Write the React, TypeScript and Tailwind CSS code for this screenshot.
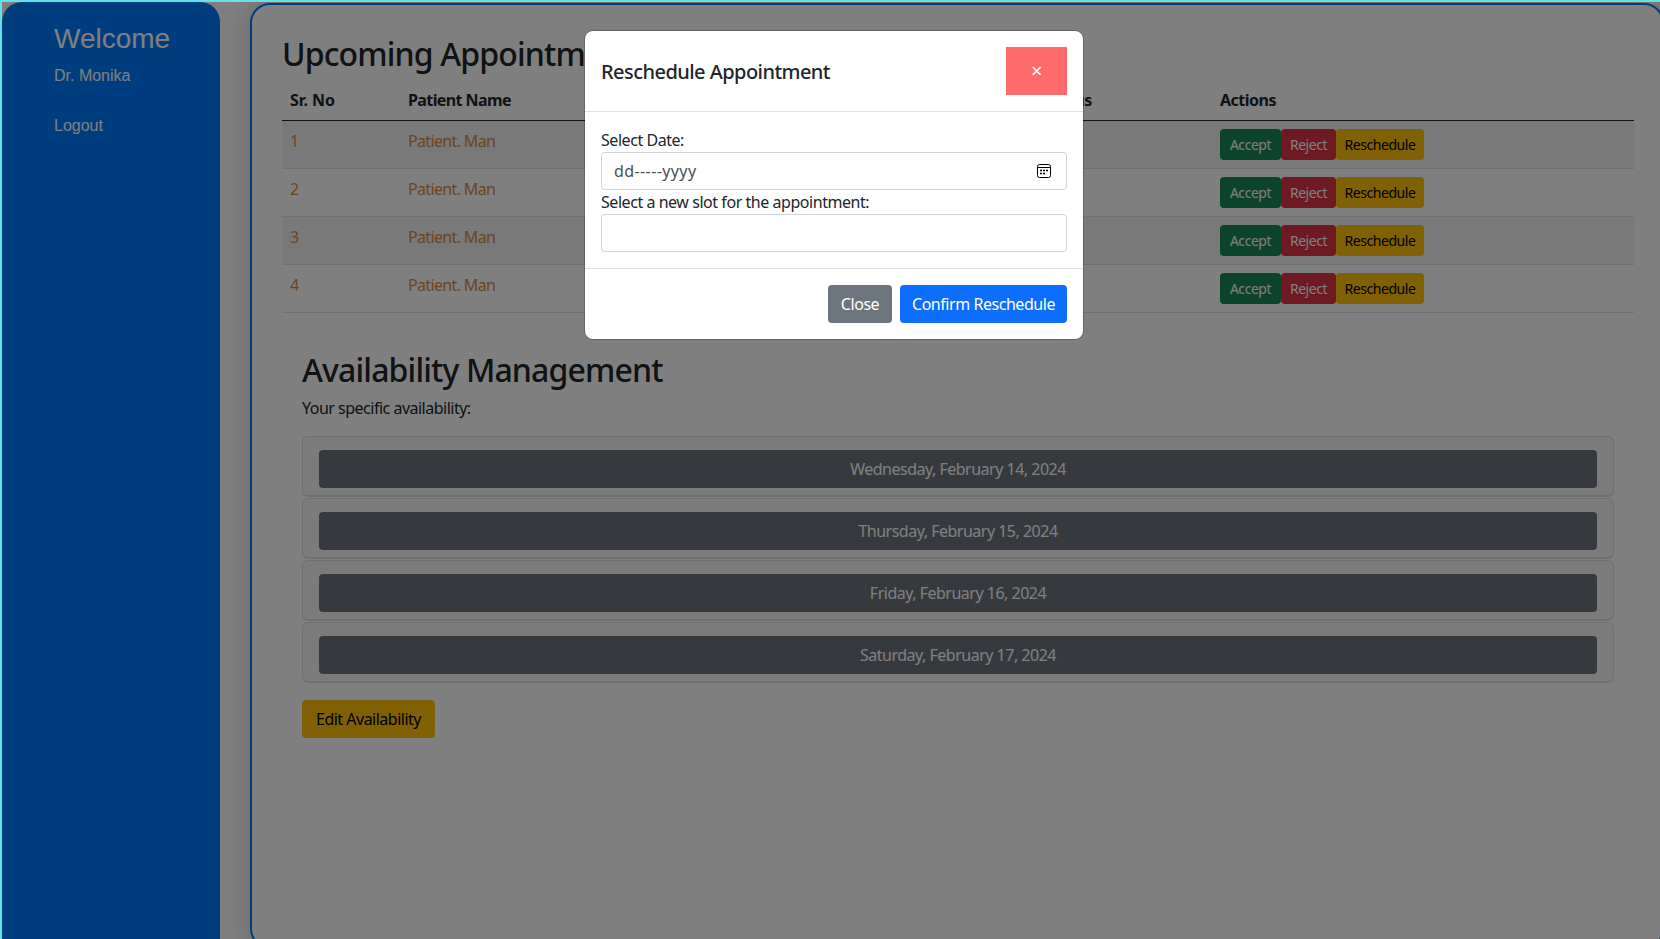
const rows = [1, 2, 3, 4];
const dates = [
  "Wednesday, February 14, 2024",
  "Thursday, February 15, 2024",
  "Friday, February 16, 2024",
  "Saturday, February 17, 2024",
];

const CalendarIcon = () => (
  <svg width="14" height="14" viewBox="0 0 14 14" fill="none" stroke="#000">
    <rect x="0.5" y="0.5" width="13" height="13" rx="2" />
    <path d="M1 3.5h12" />
    <path d="M3 6.5h2M6 6.5h2M9 6.5h2M3 9.5h2M6 9.5h2" strokeWidth="1.6" />
  </svg>
);

const App = () => {
  return (
    <div className="relative h-[939px] w-[1660px] overflow-hidden border-t-2 border-l-2 border-[#66dfe6] bg-white font-['Noto_Sans',sans-serif] text-[16px] tracking-[-0.5px] text-[#212529]">
      {/* page */}
      <div className="flex h-full">
        {/* Sidebar */}
        <aside className="w-[218px] shrink-0 rounded-t-[20px] bg-[#007bff] pl-[52px] pt-[21px] font-['Liberation_Sans',sans-serif] tracking-normal text-white">
          <div className="text-[28px] leading-[32px]">Welcome</div>
          <div className="mt-[12px] text-[16px] leading-[18px]">Dr. Monika</div>
          <div className="mt-[32px] text-[16px] leading-[18px]">Logout</div>
        </aside>

        {/* Main */}
        <main className="ml-[30px] mt-px h-[946px] w-[1414px] shrink-0 rounded-[20px] border-2 border-[#007bff] pl-[30px] shadow-[0_0_30px_rgba(0,0,0,0.2)]">
          <h2 className="mt-[30px] text-[32px] font-medium leading-[38px] tracking-[-0.85px]">Upcoming Appointments</h2>

          <table className="mt-[7px] w-[1352px] table-fixed border-collapse text-left">
            <thead>
              <tr className="h-[40px] border-b border-[#212529]">
                <th className="w-[118px] px-2 font-bold tracking-normal">Sr. No</th>
                <th className="w-[350px] px-2 font-bold tracking-[-0.6px]">Patient Name</th>
                <th className="w-[286px] px-2 font-bold">Date</th>
                <th className="w-[176px] px-2 font-bold">Status</th>
                <th className="px-2 font-bold">Actions</th>
              </tr>
            </thead>
            <tbody>
              {rows.map((n) => (
                <tr key={n} className={`h-[48px] border-b border-[#dee2e6] ${n % 2 === 1 ? "bg-black/5" : ""}`}>
                  <td className="px-2 align-top pt-[8px] text-[#d98a3f]">{n}</td>
                  <td className="px-2 align-top pt-[8px] tracking-[-0.65px] text-[#d98a3f]">Patient. Man</td>
                  <td />
                  <td />
                  <td className="px-2 align-top pt-[8px]">
                    <div className="flex text-[14px] leading-[21px] tracking-[-0.45px]">
                      <button className="h-[31px] w-[61px] rounded bg-[#198754] text-white">Accept</button>
                      <button className="h-[31px] w-[55px] rounded bg-[#dc3545] text-white">Reject</button>
                      <button className="h-[31px] w-[88px] rounded bg-[#ffc107] text-black">Reschedule</button>
                    </div>
                  </td>
                </tr>
              ))}
            </tbody>
          </table>

          {/* Availability */}
          <section className="ml-[20px] mt-[38px] w-[1312px]">
            <h2 className="text-[32px] font-medium leading-[38px] tracking-[-0.85px]">Availability Management</h2>
            <p className="mt-[7px] leading-[24px]">Your specific availability:</p>
            <div className="mt-[16px]">
              {dates.map((d) => (
                <div key={d} className="mb-px h-[61px] rounded-md border border-b-2 border-black/10 bg-black/[0.03] px-[16px] pt-[13px]">
                  <button className="h-[38px] w-full rounded bg-[#6c757d] text-white">{d}</button>
                </div>
              ))}
            </div>
            <button className="mt-[16px] h-[38px] w-[133px] rounded bg-[#ffc107] text-black">Edit Availability</button>
          </section>
        </main>
      </div>

      {/* Backdrop */}
      <div className="absolute inset-0 bg-black/50" />

      {/* Modal */}
      <div className="absolute left-[583px] top-[29px] w-[498px] rounded-lg bg-white tracking-[-0.45px] shadow-[0_0_0_1px_rgba(0,0,0,0.2)]">
        <div className="flex h-[81px] items-center justify-between border-b border-[#dee2e6] px-4">
          <h5 className="pt-[2px] text-[20px] font-medium leading-[30px] tracking-[-0.55px]">Reschedule Appointment</h5>
          <button className="h-[48px] w-[61px] bg-[#ff6b6b] text-[20px] text-white">×</button>
        </div>
        <div className="h-[157px] border-b border-[#dee2e6] px-4 pt-[16px]">
          <label className="block leading-[24px]">Select Date:</label>
          <div className="flex h-[38px] items-center justify-between rounded border border-[#ced4da] pl-3 pr-[15px]">
            <span className="tracking-[0.4px] text-[#495057]">dd-----yyyy</span>
            <CalendarIcon />
          </div>
          <label className="block leading-[24px]">Select a new slot for the appointment:</label>
          <div className="h-[38px] rounded border border-[#ced4da]" />
        </div>
        <div className="flex h-[70px] items-center justify-end gap-2 px-4">
          <button className="h-[38px] w-[64px] rounded bg-[#6c757d] text-white">Close</button>
          <button className="h-[38px] w-[167px] rounded bg-[#0d6efd] text-white">Confirm Reschedule</button>
        </div>
      </div>
    </div>
  );
};

export default App;
